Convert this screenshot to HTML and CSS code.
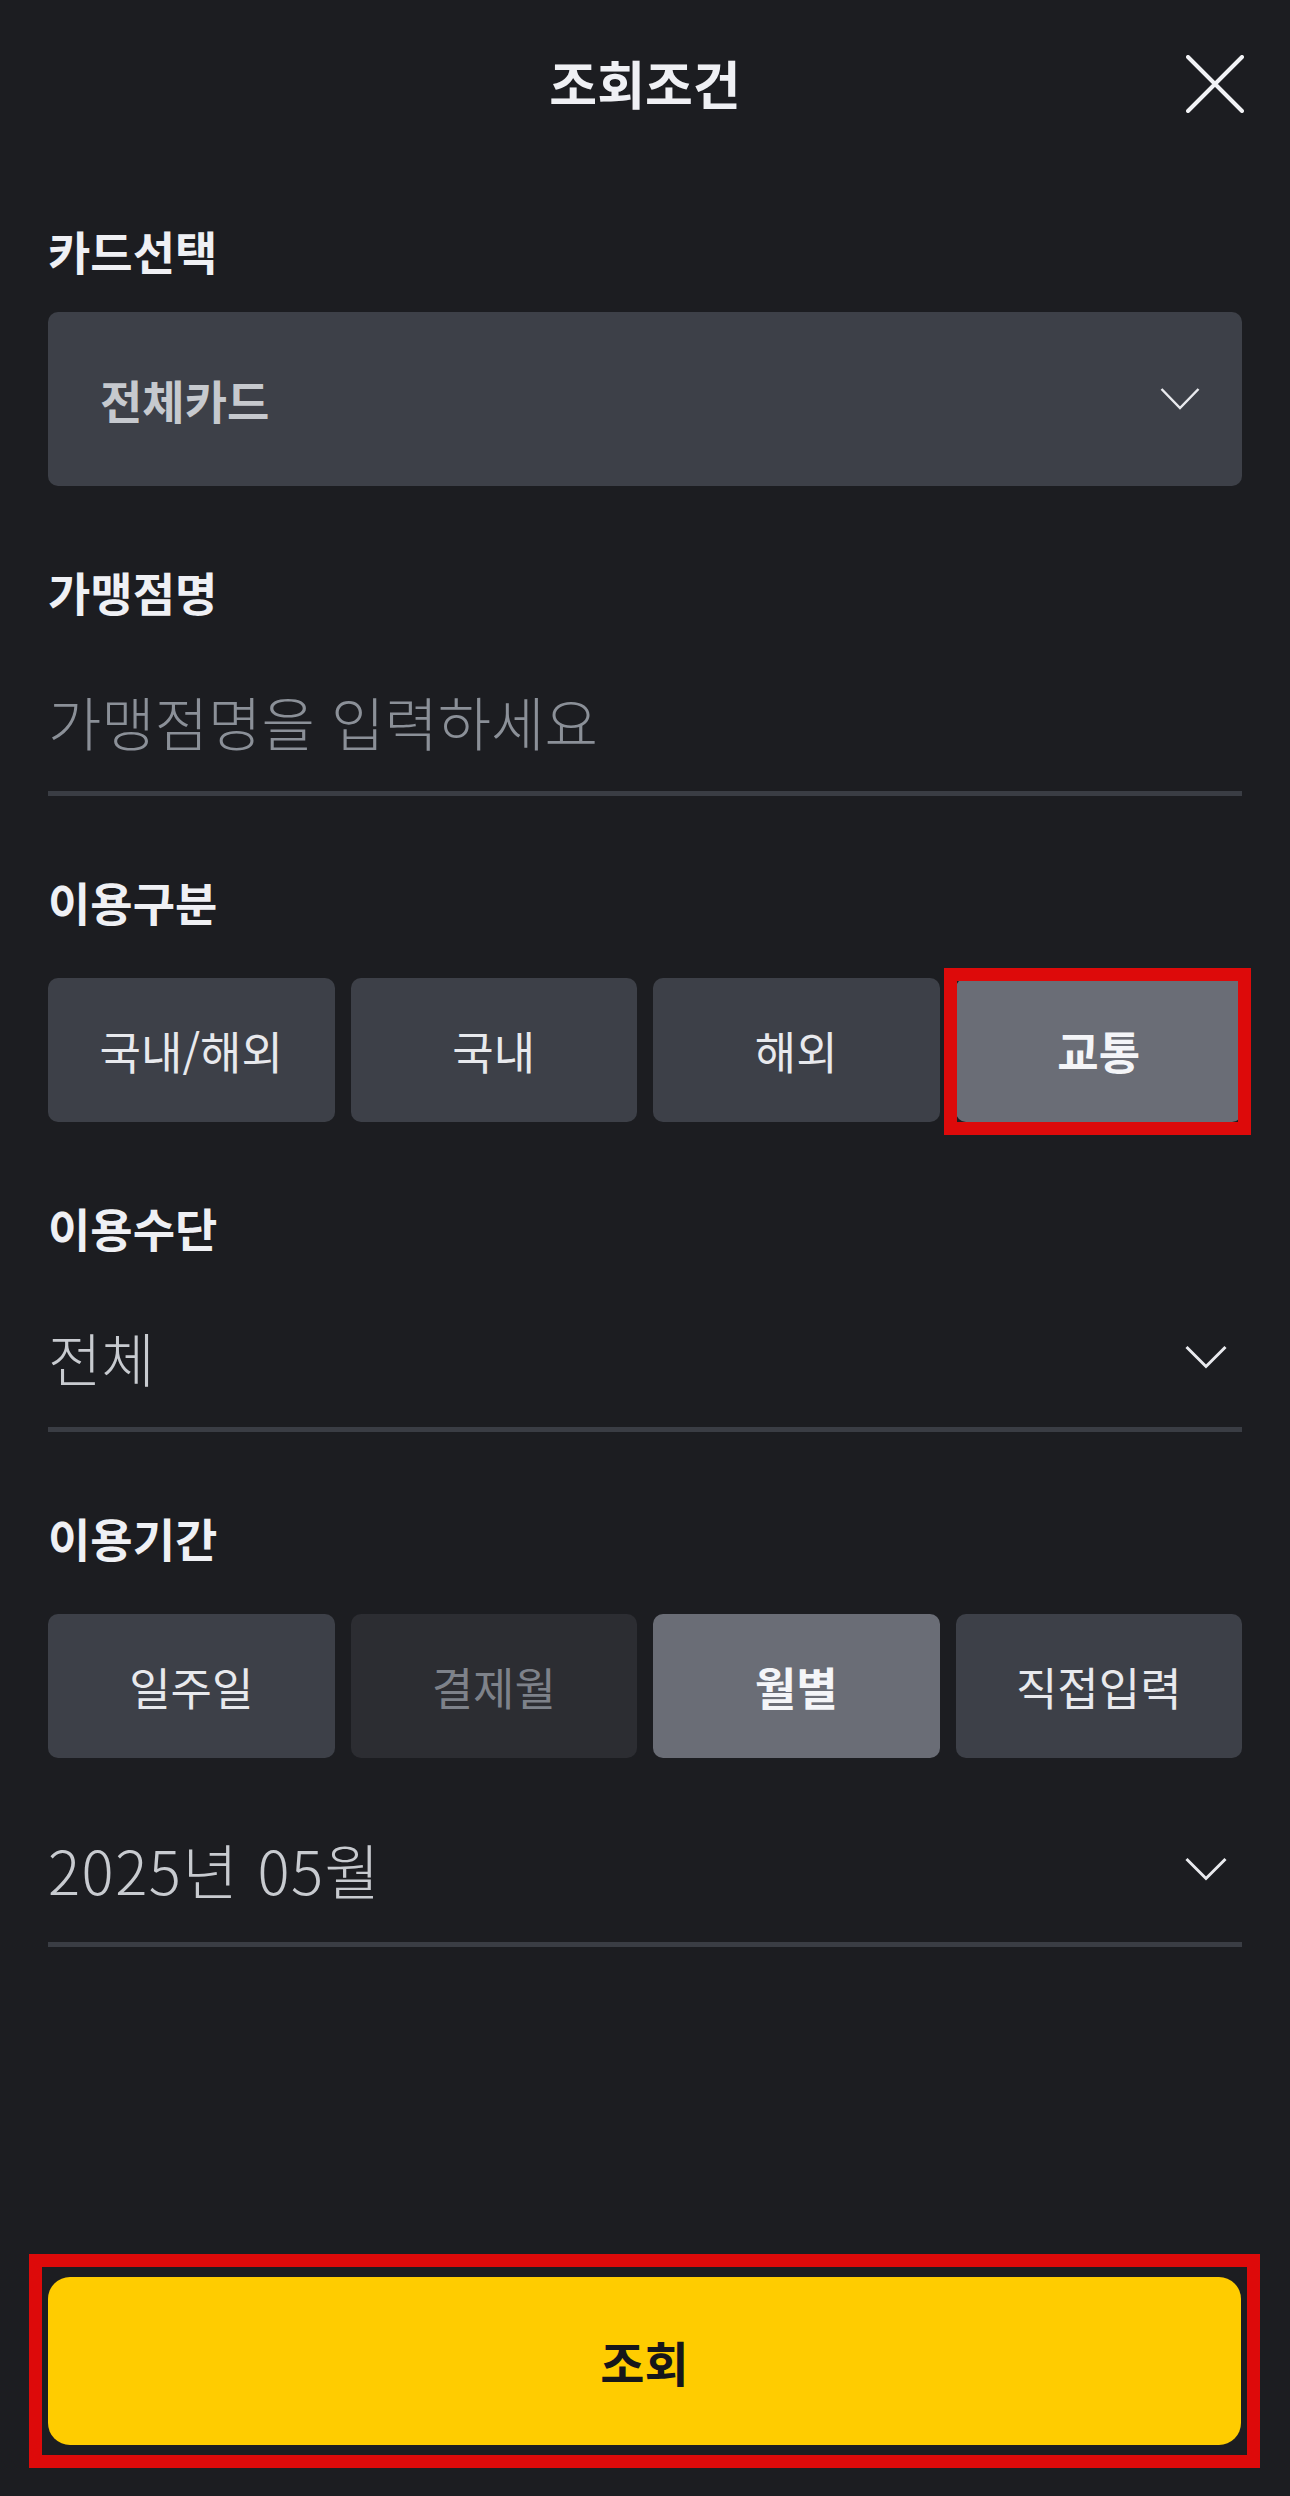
FILE: index.html
```html
<!DOCTYPE html>
<html lang="ko">
<head>
<meta charset="utf-8">
<title>조회조건</title>
<link rel="stylesheet" href="styles.css">
</head>
<body>
<div class="sheet">

<header class="sheethead">
	<h1 class="sheettitle">조회조건</h1>
	<button class="closebtn" type="button" aria-label="닫기">
		<svg width="58" height="58" viewBox="0 0 58 58"><path d="M2 2 L56 56 M56 2 L2 56" stroke="#f2f3f6" stroke-width="4" stroke-linecap="round" fill="none"/></svg>
	</button>
</header>

<div class="field">
	<div class="fieldlabel">카드선택</div>
	<div class="cardselect">
		<span>전체카드</span>
		<svg class="chevron" width="40" height="24" viewBox="0 0 40 24"><path d="M1.5 2 L20 21 L38.5 2" stroke="#e9eaee" stroke-width="2.5" fill="none"/></svg>
	</div>
</div>

<div class="field">
	<div class="fieldlabel">가맹점명</div>
	<div class="lineinput placeholder">가맹점명을 입력하세요</div>
</div>

<div class="field">
	<div class="fieldlabel">이용구분</div>
	<div class="chips">
		<div class="chip">국내/해외</div>
		<div class="chip">국내</div>
		<div class="chip">해외</div>
		<div class="chip on marked">교통</div>
	</div>
</div>

<div class="field">
	<div class="fieldlabel">이용수단</div>
	<div class="lineinput">
		<span>전체</span>
		<svg class="chevron" width="42" height="24" viewBox="0 0 42 24"><path d="M1.5 2 L21 21.5 L40.5 2" stroke="#e9eaee" stroke-width="3" fill="none"/></svg>
	</div>
</div>

<div class="field">
	<div class="fieldlabel">이용기간</div>
	<div class="chips period">
		<div class="chip">일주일</div>
		<div class="chip off">결제월</div>
		<div class="chip on">월별</div>
		<div class="chip">직접입력</div>
	</div>
	<div class="lineinput dateline">
		<span>2025년 05월</span>
		<svg class="chevron" width="42" height="24" viewBox="0 0 42 24"><path d="M1.5 2 L21 21.5 L40.5 2" stroke="#e9eaee" stroke-width="3" fill="none"/></svg>
	</div>
</div>

<div class="footer">
	<div class="footermark">
		<button class="submitbtn" type="button">조회</button>
	</div>
</div>

</div>
</body>
</html>
```

FILE: styles.css
```css
html, body {
	margin: 0;
	padding: 0;
	background: #1c1d21;
}
body {
	font-family: "Noto Sans CJK KR", "Noto Sans", sans-serif;
	color: #eeeff3;
}
.sheet {
	display: flex;
	flex-direction: column;
	min-height: 2496px;
	box-sizing: border-box;
}
.sheethead {
	position: relative;
	height: 165px;
	display: flex;
	align-items: center;
	justify-content: center;
}
.sheettitle {
	margin: 0;
	font-size: 52px;
	font-weight: 700;
	line-height: 60px;
	color: #eff0f4;
}
.closebtn {
	position: absolute;
	right: 46px;
	top: 55px;
	padding: 0;
	border: 0;
	background: none;
	width: 58px;
	height: 58px;
}
.closebtn svg {
	display: block;
}
.field {
	padding: 0 48px;
	display: flex;
	flex-direction: column;
}
.fieldlabel {
	margin-top: 75px;
	font-size: 46px;
	font-weight: 700;
	line-height: 60px;
	height: 60px;
	color: #eff0f4;
}
.field:first-of-type .fieldlabel {
	margin-top: 55px;
}
.cardselect {
	margin-top: 32px;
	height: 174px;
	background: #3d4048;
	border-radius: 10px;
	display: flex;
	align-items: center;
	justify-content: space-between;
	padding: 0 42px 0 52px;
	font-size: 46px;
	font-weight: 700;
	color: #c6c9ce;
}
.chevron {
	display: block;
}
.lineinput {
	display: flex;
	align-items: center;
	justify-content: space-between;
	padding: 70px 15px 40px 0;
	border-bottom: 5px solid #3a3d44;
	font-size: 58px;
	font-weight: 300;
	line-height: 60px;
	color: #c8cbd0;
}
.lineinput.placeholder {
	color: #8b9098;
}
.dateline {
	padding-top: 81px;
	padding-bottom: 43px;
	font-size: 60px;
	letter-spacing: 1.5px;
}
.chips {
	display: grid;
	grid-template-columns: repeat(4, 1fr);
	gap: 16px;
	margin-top: 47px;
}
.chip {
	height: 144px;
	border-radius: 10px;
	background: #3d4048;
	display: flex;
	align-items: center;
	justify-content: center;
	font-size: 45px;
	font-weight: 400;
	color: #e8e9ed;
}
.chip.off {
	background: #2c2d32;
	color: #7e828a;
}
.chip.on {
	background: #6a6d76;
	color: #f4f5f8;
	font-weight: 700;
}
/* red frame drawn on top of the chosen chip */
.chip.marked {
	position: relative;
}
.chip.marked::after {
	content: "";
	position: absolute;
	top: -10px;
	right: -9px;
	bottom: -13px;
	left: -12px;
	border: 13px solid #dd0a0a;
}
.footer {
	margin-top: auto;
	padding: 0 30px 28px 29px;
}
.footermark {
	border: 13px solid #dd0a0a;
	padding: 10px 6px;
}
.submitbtn {
	display: block;
	width: 100%;
	height: 168px;
	border: 0;
	border-radius: 22px;
	background: #ffcc00;
	font-family: "Noto Sans CJK KR", "Noto Sans", sans-serif;
	font-size: 48px;
	font-weight: 700;
	color: #16161a;
}
```
